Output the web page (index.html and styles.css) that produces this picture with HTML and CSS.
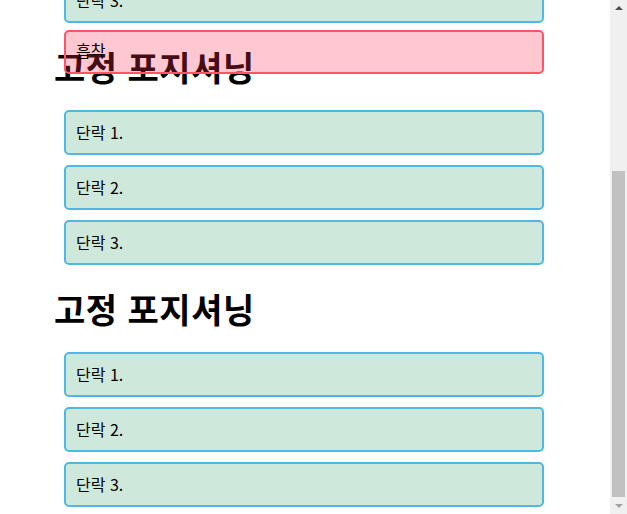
FILE: index.html
```html
<!DOCTYPE html>
<html lang="ko">
<head>
  <meta charset="UTF-8">
  <meta name="viewport" content="width=device-width, initial-scale=1.0">
  <title>포지셔닝</title>
  <link rel="stylesheet" href="styles.css">
</head>
<body>
  <div class="window">
    <div class="page">
      <div class="content">
        <p class="box">단락 3.</p>

        <h1>고정 포지셔닝</h1>
        <p class="box">단락 1.</p>
        <p class="box">단락 2.</p>
        <p class="box">단락 3.</p>

        <h1>고정 포지셔닝</h1>
        <p class="box">단락 1.</p>
        <p class="box">단락 2.</p>
        <p class="box">단락 3.</p>
      </div>
      <div class="sticky">흡착</div>
    </div>

    <div class="scrollbar">
      <span class="arrow up"></span>
      <div class="track">
        <div class="thumb"></div>
      </div>
      <span class="arrow down"></span>
    </div>
  </div>
</body>
</html>
```

FILE: styles.css
```css
html, body {
  margin: 0;
  height: 100%;
  overflow: hidden;
}
body {
  font-family: "Noto Sans CJK KR", "Noto Sans", sans-serif;
  font-size: 16px;
  line-height: 21px;
  color: #000;
  background: #fff;
}
.window {
  display: flex;
  height: 514px;
}
.page {
  flex: 1;
  position: relative;
  overflow: hidden;
}
.content {
  margin-top: -32px;
  padding-left: 54px;
  width: 500px;
}
h1 {
  font-size: 34px;
  line-height: 44px;
  font-weight: bold;
  letter-spacing: 0.5px;
  margin: 21.5px 0;
}
.box {
  margin: 10px 10px;
  padding: 10px;
  height: 21px;
  border: 2px solid #4db8e2;
  border-radius: 5px;
  background-color: #cfe8dc;
}
.sticky {
  position: absolute;
  top: 30px;
  left: 64px;
  width: 456px;
  padding: 10px;
  height: 20px;
  line-height: 17px;
  border: 2px solid #ff5468;
  border-radius: 5px;
  background-color: rgba(255, 50, 80, 0.27);
}
.scrollbar {
  width: 17px;
  background: #f0f0f0;
  display: flex;
  flex-direction: column;
  align-items: center;
}
.track {
  flex: 1;
  width: 100%;
  display: flex;
  flex-direction: column;
  justify-content: flex-end;
  padding-bottom: 1px;
}
.thumb {
  height: 326px;
  margin: 0 2px;
  background: #c1c1c1;
}
.arrow {
  width: 0;
  height: 0;
  margin: 6px 0;
  border-left: 4px solid transparent;
  border-right: 4px solid transparent;
}
.arrow.up {
  border-bottom: 4px solid #505050;
}
.arrow.down {
  border-top: 4px solid #a3a3a3;
}
```
